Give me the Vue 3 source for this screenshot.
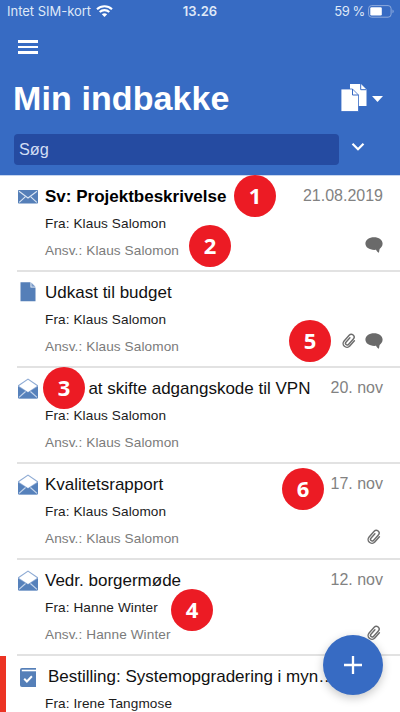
<script setup>
const rows = [
  { icon: 'mail', title: 'Sv: Projektbeskrivelse', from: 'Klaus Salomon', resp: 'Klaus Salomon', date: '21.08.2019', unread: true, chat: true },
  { icon: 'file', title: 'Udkast til budget', from: 'Klaus Salomon', resp: 'Klaus Salomon', clip: true, chat: true },
  { icon: 'open', title: 'at skifte adgangskode til VPN', from: 'Klaus Salomon', resp: 'Klaus Salomon', date: '20. nov', inset: true },
  { icon: 'open', title: 'Kvalitetsrapport', from: 'Klaus Salomon', resp: 'Klaus Salomon', date: '17. nov', clip: true },
  { icon: 'open', title: 'Vedr. borgermøde', from: 'Hanne Winter', resp: 'Hanne Winter', date: '12. nov', clip: true },
  { icon: 'task', title: 'Bestilling: Systemopgradering i myn…', from: 'Irene Tangmose', urgent: true },
]
</script>

<template>
  <div class="screen">
    <header>
      <div class="status">
        <div class="carrier">
          <span class="carrier-name">Intet SIM-kort</span>
          <svg width="17" height="12" viewBox="0 0 17 12">
            <g fill="none" stroke="#fff" stroke-width="2.1">
              <path d="M1 4.3C5.2.3 11.8.3 16 4.3" />
              <path d="M3.7 7.1c2.7-2.6 6.9-2.6 9.6 0" />
            </g>
            <path fill="#fff" d="M5.8 9.2c1.5-1.4 3.9-1.4 5.4 0L8.5 12z" />
          </svg>
        </div>
        <span class="clock">13.26</span>
        <div class="power">
          <span>59 %</span>
          <svg width="27" height="13" viewBox="0 0 27 13">
            <rect x=".6" y=".6" width="22.5" height="11.6" rx="3" fill="none" stroke="#8fabdc" />
            <rect x="2.3" y="2.3" width="11.5" height="8.2" rx="1.3" fill="#fff" />
            <path d="M24.5 4.5c1.6.6 1.6 3.2 0 3.8z" fill="#8fabdc" />
          </svg>
        </div>
      </div>
      <div class="menu"><i></i><i></i><i></i></div>
      <div class="heading">
        <h1>Min indbakke</h1>
        <svg class="pages" width="43" height="28" viewBox="0 0 43 28">
          <path fill="#fff" d="M9 0h11l5.500 5.500V22H9z" />
          <path fill="none" stroke="#3669c4" d="M19.700 0v5.700h5.800" />
          <path fill="#fff" stroke="#3669c4" stroke-width=".8" d="M0 5h11.500l6 6v16.500H0z" />
          <path fill="none" stroke="#3669c4" d="M11.500 5v6h6" />
          <path fill="#fff" d="M31 12h11l-5.500 6z" />
        </svg>
      </div>
      <div class="search">
        <div class="field">Søg</div>
        <svg width="14" height="10" viewBox="0 0 14 10">
          <path d="M1.500 1.800L7 7.300l5.500-5.500" fill="none" stroke="#fff" stroke-width="2.200" />
        </svg>
      </div>
    </header>

    <main>
      <article v-for="(row, i) in rows" :key="i" :class="{ unread: row.unread, urgent: row.urgent, inset: row.inset }">
        <div class="kind">
          <svg v-if="row.icon === 'mail'" class="mail" width="20" height="14" viewBox="0 0 20 14">
            <rect width="20" height="13.500" rx=".8" fill="#557fb8" />
            <path d="M1 1.200l9 6.800 9-6.800M1.200 12.300l6-5.500M18.800 12.300l-6-5.500" fill="none" stroke="#dbe6f4" stroke-width="1.100" />
          </svg>
          <svg v-else-if="row.icon === 'file'" class="file" width="16" height="20" viewBox="0 0 16 20">
            <path d="M.5.3H10.500V5.500h5v13.800H.5z" fill="#557fb8" />
            <path d="M11.300.5l4.200 4.200h-4.200z" fill="#7d9dca" />
          </svg>
          <svg v-else-if="row.icon === 'open'" class="open" width="20" height="21" viewBox="0 0 20 21">
            <path d="M0 7.300L10 .5l10 6.800v12a1.200 1.200 0 0 1-1.200 1.200H1.200A1.200 1.200 0 0 1 0 19.300z" fill="#8eabd4" />
            <path d="M0 8.500l10 6 10-6v10.800a1.200 1.200 0 0 1-1.200 1.200H1.200A1.200 1.200 0 0 1 0 19.300z" fill="#5681bb" />
            <path d="M1 8.100L10 1.700l9 6.400-9 5.900z" fill="#fff" />
            <path d="M1 19.400l6.600-5.900M19 19.400l-6.600-5.900" fill="none" stroke="#c5d5eb" stroke-width="1.200" />
          </svg>
          <svg v-else class="task" width="16" height="19" viewBox="0 0 16 19">
            <path d="M2 0h14v19H2a2 2 0 0 1-2-2V2a2 2 0 0 1 2-2z" fill="#557fb8" />
            <path d="M1.800 2.500H16" stroke="#fff" stroke-width="1.600" />
            <path d="M4.200 10.800l2.700 2.700 5-5.200" fill="none" stroke="#fff" stroke-width="2" />
          </svg>
        </div>
        <div class="text">
          <h2>{{ row.title }}</h2>
          <p>Fra: {{ row.from }}</p>
          <p v-if="row.resp" class="resp">Ansv.: {{ row.resp }}</p>
        </div>
        <div class="meta" :class="{ low: row.clip && !row.chat }">
          <time>{{ row.date }}</time>
          <div class="marks">
            <svg v-if="row.clip" class="clip" width="14" height="16" viewBox="0 0 14 16">
              <g transform="rotate(42 7 8)" fill="none" stroke="#6c6c6c" stroke-width="1.450" stroke-linecap="round">
                <path d="M10.900 4.300v6.900a3.800 3.800 0 0 1-7.600 0V3.600a2.800 2.800 0 0 1 5.600 0v7.300a1.700 1.700 0 0 1-3.400 0V5" />
              </g>
            </svg>
            <svg v-if="row.chat" width="18" height="16" viewBox="0 0 18 16">
              <path d="M9 .3c4.800 0 8.600 2.700 8.600 6.300 0 2.300-1.200 4.100-3 5.400l-.7 3.800c-1.300-.6-2.300-1.700-2.800-3C5 13.400.4 10.800.4 6.600.4 3 4.200.3 9 .3z" fill="#6a6a6a" />
            </svg>
          </div>
        </div>
      </article>
    </main>

    <span v-for="n in 6" :key="n" class="badge" :class="'badge-' + n">{{ n }}</span>
    <button class="add" aria-label="Ny">
      <svg width="18" height="18" viewBox="0 0 18 18"><path d="M9 0v18M0 9h18" stroke="#fff" stroke-width="2.300" /></svg>
    </button>
  </div>
</template>

<style>
body { margin: 0; overflow: hidden; }
</style>

<style scoped>
.screen {
  position: relative;
  width: 400px;
  height: 712px;
  overflow: hidden;
  background: #fff;
  font-family: "Liberation Sans", Arial, sans-serif;
}
svg { display: block; flex: none; }
h1, h2, p { margin: 0; white-space: nowrap; }
header {
  box-sizing: border-box;
  height: 176px;
  background: #376bc3;
  border-bottom: 1px solid #c6d5ee;
}
.status {
  display: grid;
  grid-template-columns: 1fr auto 1fr;
  align-items: center;
  height: 22px;
  padding: 0 5px 0 7px;
  font: 13px/22px Inter, sans-serif;
  color: #dfe8f7;
}
.carrier, .power { display: flex; align-items: center; gap: 5px; }
.carrier-name { letter-spacing: -0.02px; }
.clock { margin-left: -2px; font-weight: 600; letter-spacing: 0.1px; }
.power { justify-content: flex-end; gap: 3px; letter-spacing: -0.4px; }
.menu {
  display: flex;
  flex-direction: column;
  gap: 3px;
  width: 20px;
  padding: 18px 0 0 18px;
}
.menu i { height: 2.500px; background: #fff; }
.heading {
  display: flex;
  align-items: center;
  justify-content: space-between;
  height: 48px;
  margin-top: 20px;
  padding: 0 16px 0 13px;
}
.pages { margin-top: 1px; }
h1 { color: #fff; font-size: 34px; line-height: 48px; letter-spacing: 0.1px; }
.search { display: flex; align-items: center; gap: 12px; padding: 12px 0 0 14px; }
.field {
  box-sizing: border-box;
  width: 325px;
  height: 31px;
  padding-left: 5px;
  border-radius: 4px;
  background: #254ba1;
  color: #d2def4;
  font-size: 16.300px;
  line-height: 31px;
}
.search svg { margin-top: -5px; }
article {
  box-sizing: border-box;
  position: relative;
  display: flex;
  height: 96px;
  margin-left: 17px;
  border-bottom: 2px solid #e2e2e2;
}
.kind { flex: none; width: 28px; padding-top: 10px; }
.kind svg { margin-left: 1px; }
.kind .mail { margin-top: 4px; }
.kind .file { margin: 0 0 0 3px; }
.kind .task { margin: 2px 0 0 3px; }
.text { flex: 1; min-width: 0; padding-top: 10px; }
h2 { font-size: 17px; font-weight: 400; line-height: 22px; color: #111; }
.unread h2 { font-weight: 700; color: #000; }
p { margin-top: 3px; font-size: 13.600px; line-height: 24px; letter-spacing: 0.1px; color: #1c1c1c; }
h2 + p { margin-top: 4px; }
p.resp { color: #7b7b7b; }
.urgent h2 { padding-left: 3px; }
.inset h2 { padding-left: 43.400px; }
.urgent::before {
  content: "";
  position: absolute;
  left: -17px;
  top: 0;
  width: 6px;
  height: 96px;
  background: #ec3323;
}
.meta {
  display: flex;
  flex-direction: column;
  align-items: flex-end;
  justify-content: space-between;
  width: 0;
  margin-right: 17px;
  padding: 9px 0 17px;
}
.meta.low { padding-bottom: 13px; }
time { font-size: 16px; line-height: 22px; color: #828282; white-space: nowrap; }
.marks { display: flex; align-items: center; justify-content: flex-end; gap: 9px; height: 16px; }
.clip:last-child { margin-right: 2px; }
.badge {
  position: absolute;
  width: 42px;
  height: 42px;
  border-radius: 50%;
  background: #ec1b24;
  color: #fff;
  font: 700 22px/41px "Open Sans", sans-serif;
  text-align: center;
}
.badge-1 { left: 234px; top: 175px; }
.badge-2 { left: 189px; top: 225px; }
.badge-3 { left: 43px; top: 367px; }
.badge-4 { left: 171px; top: 589px; }
.badge-5 { left: 289px; top: 320px; }
.badge-6 { left: 282px; top: 468px; }
.add {
  position: absolute;
  left: 323px;
  top: 635px;
  display: grid;
  place-items: center;
  width: 60px;
  height: 60px;
  padding: 0;
  border: 0;
  border-radius: 50%;
  background: #376bc3;
  box-shadow: 0 3px 10px rgba(0, 0, 0, 0.22);
}
</style>
